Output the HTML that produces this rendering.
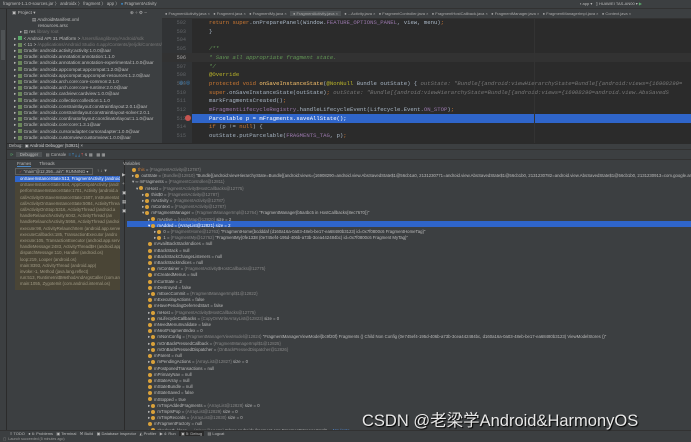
<!DOCTYPE html>
<html><head><meta charset="utf-8"><style>
*{margin:0;padding:0;box-sizing:border-box}
body{width:691px;height:442px;overflow:hidden;background:#3c3f41;font-family:"Liberation Sans",sans-serif;color:#bbbbbb;position:relative}
.a{position:absolute;white-space:nowrap}
.t{font-size:4.6px;line-height:6.2px}
.code{font-family:"Liberation Mono",monospace;font-size:5.6px;line-height:8.7px;color:#a9b7c6}
.k{color:#cc7832}.f{color:#9876aa}.c{color:#629755;font-style:italic}.an{color:#bbb529}.g{color:#787878;font-style:italic}
.ln{font-family:"Liberation Mono",monospace;font-size:5.2px;line-height:8.7px;color:#606366;text-align:right;width:14px}
.ic{display:inline-block;width:4px;height:4px;border-radius:50%;background:#d9a13a;margin-right:2px;vertical-align:middle}
.gi{display:inline-block;width:4px;height:4px;background:#6a8759;margin-right:2px;vertical-align:middle}
</style></head><body>
<div class="a" style="left:0;top:0;width:691px;height:9px;background:#3c3f41;border-bottom:1px solid #323232"></div>
<div class="a t" style="left:3px;top:1px;font-size:4.3px">fragment-1.1.0-sources.jar 〉 androidx 〉 fragment 〉 app 〉 <span style="color:#3d8ac9">●</span> FragmentActivity</div>
<div class="a t" style="left:580px;top:1px;font-size:4px">▪ app ▾ &nbsp; ▯ HUAWEI TAS-AN00 ▾ <span style="color:#59a869">▶</span></div>
<div class="a" style="left:0;top:9px;width:7px;height:428px;background:#3c3f41;border-right:1px solid #2b2b2b"></div>
<div class="a" style="left:7px;top:9px;width:155px;height:134px;background:#3c3f41"></div>
<div class="a t" style="left:12px;top:10px">▣ Project ▾</div>
<div class="a t" style="left:130px;top:10px">⊕ ÷ ⚙ –</div>
<div class="a t" style="left:10px;top:17px;width:150px">
<div style="padding-left:22px">▤ AndroidManifest.xml</div>
<div style="padding-left:28px">resources.arsc</div>
<div style="padding-left:10px">▸ ▤ res <span style="color:#777">library root</span></div>
<div style="padding-left:4px">▸ <span class="gi" style="background:#59a869"></span>&lt; Android API 31 Platform &gt; <span style="color:#777">/Users/lianglibrary/Android/sdk</span></div>
<div style="padding-left:4px">▸ <span class="gi"></span>&lt; 11 &gt; <span style="color:#777">/Applications/Android Studio 4.app/Contents/jre/jdk/Contents/Ho</span></div>
<div style="padding-left:4px">▸ <span class="gi"></span>Gradle: androidx.activity:activity:1.0.0@aar</div>
<div style="padding-left:4px">▸ <span class="gi"></span>Gradle: androidx.annotation:annotation:1.1.0</div>
<div style="padding-left:4px">▸ <span class="gi"></span>Gradle: androidx.annotation:annotation-experimental:1.0.0@aar</div>
<div style="padding-left:4px">▸ <span class="gi"></span>Gradle: androidx.appcompat:appcompat:1.2.0@aar</div>
<div style="padding-left:4px">▸ <span class="gi"></span>Gradle: androidx.appcompat:appcompat-resources:1.2.0@aar</div>
<div style="padding-left:4px">▸ <span class="gi"></span>Gradle: androidx.arch.core:core-common:2.1.0</div>
<div style="padding-left:4px">▸ <span class="gi"></span>Gradle: androidx.arch.core:core-runtime:2.0.0@aar</div>
<div style="padding-left:4px">▸ <span class="gi"></span>Gradle: androidx.cardview:cardview:1.0.0@aar</div>
<div style="padding-left:4px">▸ <span class="gi"></span>Gradle: androidx.collection:collection:1.1.0</div>
<div style="padding-left:4px">▸ <span class="gi"></span>Gradle: androidx.constraintlayout:constraintlayout:2.0.1@aar</div>
<div style="padding-left:4px">▸ <span class="gi"></span>Gradle: androidx.constraintlayout:constraintlayout-solver:2.0.1</div>
<div style="padding-left:4px">▸ <span class="gi"></span>Gradle: androidx.coordinatorlayout:coordinatorlayout:1.1.0@aar</div>
<div style="padding-left:4px">▸ <span class="gi"></span>Gradle: androidx.core:core:1.3.1@aar</div>
<div style="padding-left:4px">▸ <span class="gi"></span>Gradle: androidx.cursoradapter:cursoradapter:1.0.0@aar</div>
<div style="padding-left:4px">▸ <span class="gi"></span>Gradle: androidx.customview:customview:1.0.0@aar</div>
</div>
<div class="a" style="left:162px;top:9px;width:529px;height:10px;background:#3c3f41;border-bottom:1px solid #323232"></div>
<div class="a t" style="left:165px;top:11px;font-size:4px;color:#aaa">● FragmentActivity.java × &nbsp; ● Fragment.java × &nbsp; ● FragmentMy.java × &nbsp; <span style="background:#4e5254;padding:0 3px">● FragmentActivity.java ×</span> &nbsp; ● ...Activity.java × &nbsp; ● FragmentController.java × &nbsp; ● FragmentHostCallback.java × &nbsp; ● FragmentManager.java × &nbsp; ● FragmentManagerImpl.java × &nbsp; ● Context.java ×</div>
<div class="a" style="left:162px;top:19px;width:529px;height:124px;background:#2b2b2b"></div>
<div class="a" style="left:162px;top:19px;width:30px;height:124px;background:#313335"></div>
<div class="a" style="left:162px;top:53px;width:529px;height:9px;background:#323232"></div>
<div class="a" style="left:192px;top:114px;width:499px;height:9px;background:#2f65ca"></div>
<div class="a" style="left:534px;top:19px;width:1px;height:124px;background:#333"></div>
<div class="a" style="left:172px;top:19px">
<div class="ln">502</div><div class="ln">503</div><div class="ln">504</div><div class="ln">505</div><div class="ln" style="color:#a4a3a3">506</div><div class="ln">507</div><div class="ln">508</div><div class="ln">509</div><div class="ln">510</div><div class="ln">511</div><div class="ln">512</div><div class="ln">513</div><div class="ln">514</div><div class="ln">515</div>
</div>
<div class="a" style="left:185px;top:115px;width:6px;height:6px;border-radius:50%;background:#c75450"></div>
<div class="a" style="left:179px;top:80px;font-size:5px;color:#3d8ac9">◎↑◎</div>
<div class="a code" style="left:209px;top:19px">
<div>    <span class="k">return super</span>.onPreparePanel(Window.<span class="f">FEATURE_OPTIONS_PANEL</span>, view, menu)<span class="k">;</span></div>
<div>}</div>
<div>&nbsp;</div>
<div class="c">/**</div>
<div class="c"> * Save all appropriate fragment state.</div>
<div class="c"> */</div>
<div class="an">@Override</div>
<div><span class="k">protected void</span> <span style="color:#ffc66d">onSaveInstanceState</span>(<span class="an">@NonNull</span> Bundle outState) {  <span class="g">outState: "Bundle[{android:viewHierarchyState=Bundle[{android:views={16908290=</span></div>
<div>    <span class="k">super</span>.onSaveInstanceState(outState)<span class="k">;</span>  <span class="g">outState: "Bundle[{android:viewHierarchyState=Bundle[{android:views={16908290=android.view.AbsSavedS</span></div>
<div>    markFragmentsCreated()<span class="k">;</span></div>
<div>    <span class="f">mFragmentLifecycleRegistry</span>.handleLifecycleEvent(Lifecycle.Event.<span class="f">ON_STOP</span>)<span class="k">;</span></div>
<div style="color:#fff">    Parcelable p = mFragments.saveAllState();</div>
<div>    <span class="k">if</span> (p != <span class="k">null</span>) {</div>
<div>        outState.putParcelable(<span class="f">FRAGMENTS_TAG</span>, p)<span class="k">;</span></div>
</div>
<div class="a" style="left:7px;top:143px;width:684px;height:7px;background:#3c3f41;border-top:1px solid #2b2b2b;border-bottom:1px solid #323232"></div>
<div class="a t" style="left:9px;top:143px;font-size:4.2px">Debug: &nbsp;<span style="color:#ccc">▣ Android Debugger (53921) ×</span></div>
<div class="a" style="left:7px;top:150px;width:684px;height:10px;background:#3c3f41;border-bottom:1px solid #323232"></div>
<div class="a t" style="left:10px;top:152px;font-size:4.2px"><span style="color:#59a869">⟳</span> &nbsp;<span style="background:#4e5254;padding:0 4px">Debugger</span> &nbsp; ▤ Console &nbsp;<span style="color:#3d8ac9">≡ ⤒ ⤓ ⤓</span> <span style="color:#c75450">⤒</span> ↯ ▦ &nbsp; ▦ ▦</div>
<div class="a" style="left:7px;top:160px;width:118px;height:270px;background:#3c3f41;border-right:1px solid #2b2b2b"></div>
<div class="a t" style="left:17px;top:161px;font-size:4.2px"><span style="border-bottom:1px solid #4a88c7">Frames</span> &nbsp; &nbsp; &nbsp; Threads</div>
<div class="a t" style="left:15px;top:168px;font-size:4.2px;border:1px solid #5e6060;padding:0 3px;width:78px;height:7px;line-height:5px"><span style="color:#c75450">✓</span> "main"@12,356...ain": RUNNING ▾</div>
<div class="a t" style="left:97px;top:168px;font-size:4.2px">↑ ↓ ▼</div>
<div class="a" style="left:15px;top:176px;width:105px;height:114px;background:#4a4536"></div>
<div class="a t" style="left:15px;top:176px;width:105px;overflow:hidden;color:#a09a85;font-size:4.3px">
<div style="background:#2f65ca;color:#fff;padding-left:5px">onSaveInstanceState:513, FragmentActivity (androidx</div>
<div style="padding-left:5px">onSaveInstanceState:644, AppCompatActivity (andr</div>
<div style="padding-left:5px">performSaveInstanceState:1701, Activity (android.a</div>
<div style="padding-left:5px">callActivityOnSaveInstanceState:1507, Instrumentat</div>
<div style="padding-left:5px">callActivityOnSaveInstanceState:5084, ActivityThrea</div>
<div style="padding-left:5px">callActivityOnStop:5316, ActivityThread (android.a</div>
<div style="padding-left:5px">handleRelaunchActivity:6042, ActivityThread (an</div>
<div style="padding-left:5px">handleRelaunchActivity:5958, ActivityThread (androi</div>
<div style="padding-left:5px">execute:98, ActivityRelaunchItem (android.app.serve</div>
<div style="padding-left:5px">executeCallbacks:185, TransactionExecutor (andro</div>
<div style="padding-left:5px">execute:105, TransactionExecutor (android.app.serv</div>
<div style="padding-left:5px">handleMessage:2483, ActivityThread$H (android.app</div>
<div style="padding-left:5px">dispatchMessage:110, Handler (android.os)</div>
<div style="padding-left:5px">loop:219, Looper (android.os)</div>
<div style="padding-left:5px">main:8393, ActivityThread (android.app)</div>
<div style="padding-left:5px">invoke:-1, Method (java.lang.reflect)</div>
<div style="padding-left:5px">run:513, RuntimeInit$MethodAndArgsCaller (com.and</div>
<div style="padding-left:5px">main:1055, ZygoteInit (com.android.internal.os)</div>
</div>
<div class="a" style="left:126px;top:160px;width:565px;height:270px;background:#3c3f41"></div>
<div class="a t" style="left:123px;top:161px;font-size:4.2px">Variables</div>
<div class="a t" style="left:122px;top:170px;font-size:4.5px;line-height:9px">▶<br>+<br>▣<br>▦<br>▣</div>
<div class="a" style="left:127px;top:221px;width:564px;height:6px;background:#2f65ca"></div>
<div class="a t" style="left:130px;top:167px;font-size:4.3px;color:#bbb">
<div style="padding-left:2px"><span class="ic"></span><span style="color:#cc7832">this</span> = <span style="color:#888">{FragmentActivity@12787}</span></div>
<div style="padding-left:2px">▸ <span class="ic"></span>outState = <span style="color:#888">{Bundle@12810}</span> "Bundle[{android:viewHierarchyState=Bundle[{android:views={16908290=android.view.AbsSavedState$1@56cb1a0, 2131230771=android.view.AbsSavedState$1@56cb1b0, 2131230782=android.view.AbsSavedState$1@56cb1b0, 2131230913=com.google.android.mat</div>
<div style="padding-left:2px">▾ ∞ mFragments = <span style="color:#888">{FragmentController@12811}</span></div>
<div style="padding-left:6px">▾ <span class="ic"></span>mHost = <span style="color:#888">{FragmentActivity$HostCallbacks@12775}</span></div>
<div style="padding-left:12px">▸ <span class="ic"></span>this$0 = <span style="color:#888">{FragmentActivity@12787}</span></div>
<div style="padding-left:12px">▸ <span class="ic"></span>mActivity = <span style="color:#888">{FragmentActivity@12787}</span></div>
<div style="padding-left:12px">▸ <span class="ic"></span>mContext = <span style="color:#888">{FragmentActivity@12787}</span></div>
<div style="padding-left:12px">▾ <span class="ic"></span>mFragmentManager = <span style="color:#888">{FragmentManagerImpl@12764}</span> "FragmentManager{b5a4bc5 in HostCallbacks{8ec7670}}"</div>
<div style="padding-left:18px">▸ <span class="ic"></span>mActive = <span style="color:#888">{HashMap@12820}</span> size = 2</div>
<div style="padding-left:18px;color:#fff">▾ <span class="ic"></span>mAdded = {ArrayList@12821} size = 2</div>
<div style="padding-left:24px">▸ <span class="ic"></span>0 = <span style="color:#888">{FragmentHome@12763}</span> "FragmentHome{bcdddaf (d160a16a-0a03-48eb-be17-ea68480b3123) id=0x7f0800c6 FragmentHomeTag}"</div>
<div style="padding-left:24px">▸ <span class="ic"></span>1 = <span style="color:#888">{FragmentMy@12762}</span> "FragmentMy{0fe1338 (0e745ef4-195d-406b-a73b-3cea442484bc) id=0x7f0800c6 Fragment MyTag}"</div>
<div style="padding-left:18px"><span class="ic"></span>mAvailBackStackIndices = null</div>
<div style="padding-left:18px"><span class="ic"></span>mBackStack = null</div>
<div style="padding-left:18px"><span class="ic"></span>mBackStackChangeListeners = null</div>
<div style="padding-left:18px"><span class="ic"></span>mBackStackIndices = null</div>
<div style="padding-left:18px">▸ <span class="ic"></span>mContainer = <span style="color:#888">{FragmentActivity$HostCallbacks@12775}</span></div>
<div style="padding-left:18px"><span class="ic"></span>mCreatedMenus = null</div>
<div style="padding-left:18px"><span class="ic"></span>mCurState = 2</div>
<div style="padding-left:18px"><span class="ic"></span>mDestroyed = false</div>
<div style="padding-left:18px">▸ <span class="ic"></span>mExecCommit = <span style="color:#888">{FragmentManagerImpl$1@12822}</span></div>
<div style="padding-left:18px"><span class="ic"></span>mExecutingActions = false</div>
<div style="padding-left:18px"><span class="ic"></span>mHavePendingDeferredStart = false</div>
<div style="padding-left:18px">▸ <span class="ic"></span>mHost = <span style="color:#888">{FragmentActivity$HostCallbacks@12775}</span></div>
<div style="padding-left:18px">▸ <span class="ic"></span>mLifecycleCallbacks = <span style="color:#888">{CopyOnWriteArrayList@12823}</span> size = 0</div>
<div style="padding-left:18px"><span class="ic"></span>mNeedMenuInvalidate = false</div>
<div style="padding-left:18px"><span class="ic"></span>mNextFragmentIndex = 0</div>
<div style="padding-left:18px">▸ <span class="ic"></span>mNonConfig = <span style="color:#888">{FragmentManagerViewModel@12824}</span> "FragmentManagerViewModel{bc9f20f} Fragments () Child Non Config (0e745ef4-195d-406b-a73b-3cea442484bc, d160a16a-0a03-48eb-be17-ea68480b3123) ViewModelStores ()"</div>
<div style="padding-left:18px">▸ <span class="ic"></span>mOnBackPressedCallback = <span style="color:#888">{FragmentManagerImpl$1@12825}</span></div>
<div style="padding-left:18px">▸ <span class="ic"></span>mOnBackPressedDispatcher = <span style="color:#888">{OnBackPressedDispatcher@12826}</span></div>
<div style="padding-left:18px"><span class="ic"></span>mParent = null</div>
<div style="padding-left:18px">▸ <span class="ic"></span>mPendingActions = <span style="color:#888">{ArrayList@12827}</span> size = 0</div>
<div style="padding-left:18px"><span class="ic"></span>mPostponedTransactions = null</div>
<div style="padding-left:18px"><span class="ic"></span>mPrimaryNav = null</div>
<div style="padding-left:18px"><span class="ic"></span>mStateArray = null</div>
<div style="padding-left:18px"><span class="ic"></span>mStateBundle = null</div>
<div style="padding-left:18px"><span class="ic"></span>mStateSaved = false</div>
<div style="padding-left:18px"><span class="ic"></span>mStopped = true</div>
<div style="padding-left:18px">▸ <span class="ic"></span>mTmpAddedFragments = <span style="color:#888">{ArrayList@12828}</span> size = 0</div>
<div style="padding-left:18px">▸ <span class="ic"></span>mTmpIsPop = <span style="color:#888">{ArrayList@12829}</span> size = 0</div>
<div style="padding-left:18px">▸ <span class="ic"></span>mTmpRecords = <span style="color:#888">{ArrayList@12830}</span> size = 0</div>
<div style="padding-left:18px"><span class="ic"></span>mFragmentFactory = null</div>
<div style="padding-left:18px">▸ <span class="ic"></span>shadow$_klass_ = <span style="color:#888">{Class@12489}</span> "class androidx.fragment.app.FragmentManagerImpl" ... <span style="color:#5394ec">Navigate</span></div>
</div>
<div class="a" style="left:1px;top:30px;width:4px;height:30px;background:#4e5254"></div>
<div class="a" style="left:0;top:430px;width:691px;height:7px;background:#3c3f41;border-top:1px solid #323232"></div>
<div class="a t" style="left:10px;top:430px;font-size:4px;line-height:7px">≡ TODO &nbsp; ● 6: Problems &nbsp; ▣ Terminal &nbsp; ⚒ Build &nbsp; ▣ Database Inspector &nbsp; ◭ Profiler &nbsp; ▶ 4: Run &nbsp; <span style="background:#2b2b2b;padding:0 2px">▣ 5: Debug</span> &nbsp; ▤ Logcat</div>
<div class="a" style="left:0;top:437px;width:691px;height:5px;background:#3c3f41"></div>
<div class="a t" style="left:3px;top:437px;font-size:3.6px;line-height:5px;color:#999">▢ &nbsp;Launch succeeded (5 minutes ago)</div>
<div class="a" style="left:362px;top:410px;font-family:'Liberation Sans','Noto Sans CJK SC',sans-serif;font-size:16.5px;line-height:22px;color:#e8e8e8;text-shadow:1px 1px 1px #000">CSDN @老梁学Android&amp;HarmonyOS</div>
</body></html>
